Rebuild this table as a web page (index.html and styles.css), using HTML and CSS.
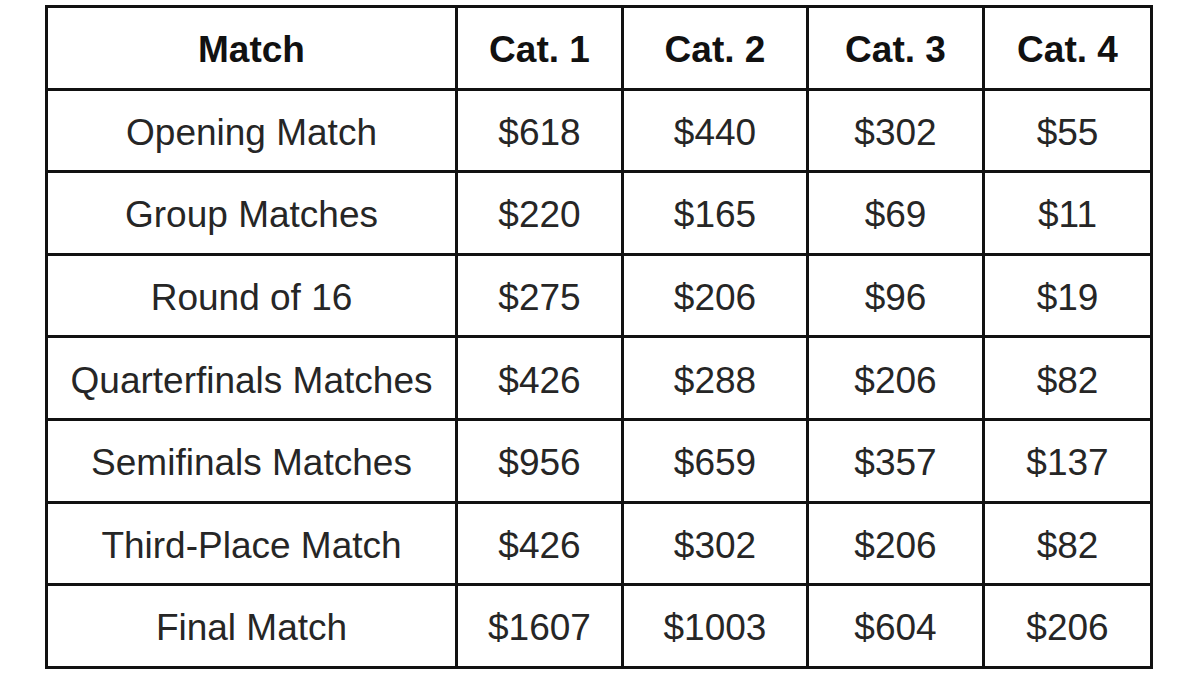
FILE: index.html
```html
<!DOCTYPE html>
<html>
<head>
<meta charset="utf-8">
<link rel="stylesheet" href="styles.css">
</head>
<body>
<table class="prices">
  <colgroup>
    <col class="c-match">
    <col class="c-1">
    <col class="c-2">
    <col class="c-3">
    <col class="c-4">
  </colgroup>
  <thead>
    <tr><th>Match</th><th>Cat. 1</th><th>Cat. 2</th><th>Cat. 3</th><th>Cat. 4</th></tr>
  </thead>
  <tbody>
    <tr><td>Opening Match</td><td>$618</td><td>$440</td><td>$302</td><td>$55</td></tr>
    <tr><td>Group Matches</td><td>$220</td><td>$165</td><td>$69</td><td>$11</td></tr>
    <tr><td>Round of 16</td><td>$275</td><td>$206</td><td>$96</td><td>$19</td></tr>
    <tr><td>Quarterfinals Matches</td><td>$426</td><td>$288</td><td>$206</td><td>$82</td></tr>
    <tr><td>Semifinals Matches</td><td>$956</td><td>$659</td><td>$357</td><td>$137</td></tr>
    <tr><td>Third-Place Match</td><td>$426</td><td>$302</td><td>$206</td><td>$82</td></tr>
    <tr><td>Final Match</td><td>$1607</td><td>$1003</td><td>$604</td><td>$206</td></tr>
  </tbody>
</table>
</body>
</html>
```
FILE: styles.css
```css
html, body {
  margin: 0;
  padding: 0;
  background: #ffffff;
}
body {
  font-family: "Liberation Sans", Arial, sans-serif;
}
.prices {
  border-collapse: collapse;
  table-layout: fixed;
  width: 1108px;
  margin: 5px 0 0 45px;
}
.c-match { width: 410px; }
.c-1 { width: 166px; }
.c-2 { width: 185px; }
.c-3 { width: 176px; }
.c-4 { width: 168px; }
.prices th,
.prices td {
  border: 3px solid #111111;
  height: 82.6px;
  padding: 5px 0 0 0;
  text-align: center;
  vertical-align: middle;
  font-size: 37px;
  box-sizing: border-box;
  white-space: nowrap;
}
.prices th {
  font-weight: bold;
  color: #111111;
}
.prices td {
  font-weight: normal;
  color: #262626;
}
```
